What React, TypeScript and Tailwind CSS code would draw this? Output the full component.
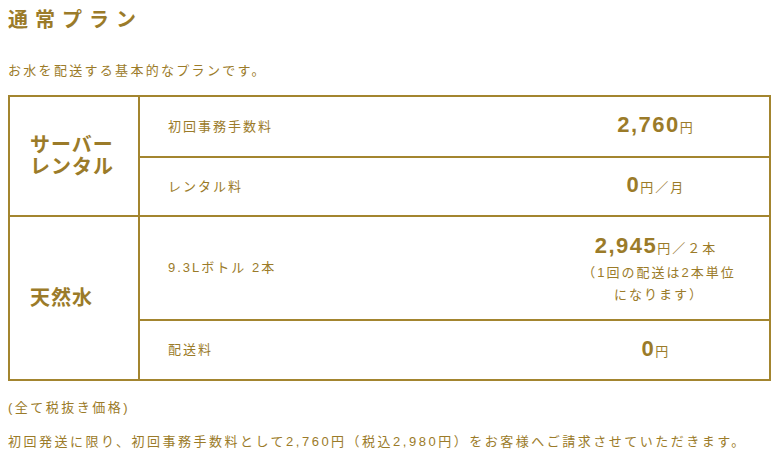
import React from 'react';

const gold = 'text-[#9b7b29]';

const Price = ({ value, unit }: { value: string; unit: string }) => (
  <span className="whitespace-nowrap">
    <span className="font-['Liberation_Sans',sans-serif] text-[22px] font-bold tracking-[1.5px]">{value}</span>
    <span className="text-[13px] tracking-[2px]">{unit}</span>
  </span>
);

const Row = ({ label, children, h, last }: { label: string; children: React.ReactNode; h: string; last?: boolean }) => (
  <div className={`flex items-center ${h} ${last ? '' : 'border-b-2 border-[#a3852f]'}`}>
    <div className="flex-1 pl-[28px] text-[13px] tracking-[2px]">{label}</div>
    <div className="w-[226px] text-center leading-[22px]">{children}</div>
  </div>
);

export default function App() {
  return (
    <div className={`min-h-screen bg-white px-2 pt-[10px] ${gold} font-['Liberation_Sans','Noto_Sans_CJK_JP',sans-serif]`}>
      <h1 className="text-[20px] font-bold leading-[20px] tracking-[7px]">通常プラン</h1>
      <p className="mt-[31px] text-[13px] leading-[20px] tracking-[2.3px]">お水を配送する基本的なプランです。</p>

      <div className="mt-[14px] border-2 border-[#a3852f]">
        {/* サーバーレンタル */}
        <div className="flex border-b-2 border-[#a3852f]">
          <div className="flex w-[130px] items-center border-r-2 border-[#a3852f] pl-[20px] text-[20px] font-bold leading-[22px] tracking-[1px]">
            サーバー<br />レンタル
          </div>
          <div className="flex flex-1 flex-col">
            <Row label="初回事務手数料" h="h-[61px]">
              <Price value="2,760" unit="円" />
            </Row>
            <Row label="レンタル料" h="h-[57px]" last>
              <Price value="0" unit="円／月" />
            </Row>
          </div>
        </div>

        {/* 天然水 */}
        <div className="flex">
          <div className="flex w-[130px] items-center border-r-2 border-[#a3852f] pl-[20px] text-[20px] font-bold leading-[22px] tracking-[1px]">
            天然水
          </div>
          <div className="flex flex-1 flex-col">
            <Row label="9.3Lボトル 2本" h="h-[104px]">
              <div className="pt-[4px]">
                <Price value="2,945" unit="円／２本" />
                <div className="mt-[2px] pl-[6px] text-[13px] leading-[22px] tracking-[2px]">
                  （1回の配送は2本単位<br />になります）
                </div>
              </div>
            </Row>
            <Row label="配送料" h="h-[58px]" last>
              <Price value="0" unit="円" />
            </Row>
          </div>
        </div>
      </div>

      <p className="mt-[17px] text-[13px] leading-[20px] tracking-[2.5px]">(全て税抜き価格)</p>
      <p className="mt-[14px] text-[13px] leading-[20px] tracking-[2.5px]">
        初回発送に限り、初回事務手数料として2,760円（税込2,980円）をお客様へご請求させていただきます。
      </p>
    </div>
  );
}
